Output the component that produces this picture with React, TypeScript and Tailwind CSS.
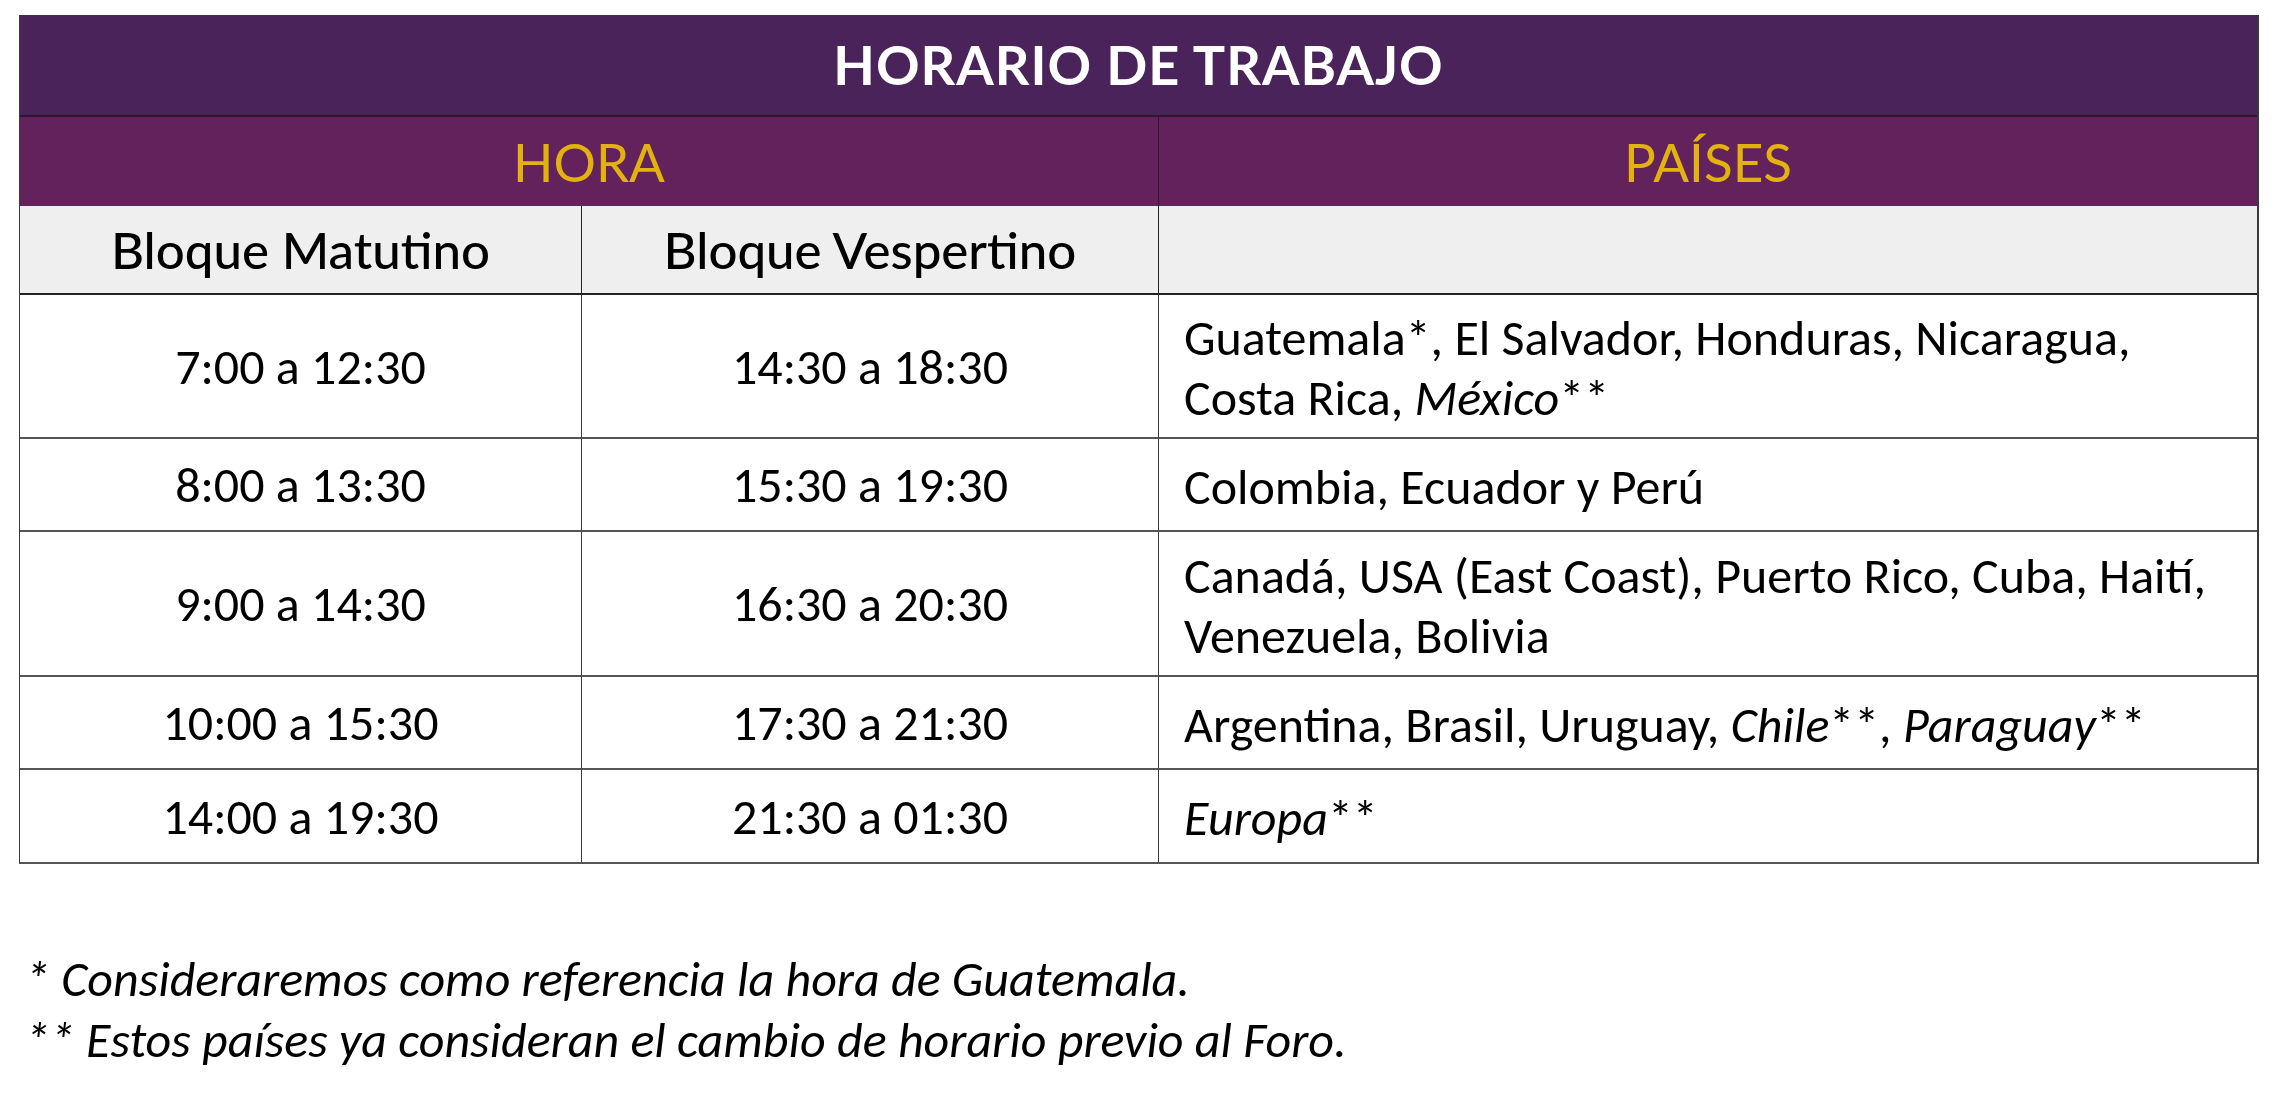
const head = "font-[Futura,'Century_Gothic','URW_Gothic',Lato,sans-serif]"
const body = "font-[Carlito,Calibri,Lato,sans-serif]"

type Row = { h: string; morning: string; evening: string; countries: React.ReactNode }

const rows: Row[] = [
  {
    h: "h-[144px]",
    morning: "7:00 a 12:30",
    evening: "14:30 a 18:30",
    countries: (
      <>
        Guatemala*, El Salvador, Honduras, Nicaragua,
        <br />
        Costa Rica, <span className="italic">México</span>**
      </>
    ),
  },
  { h: "h-[93px]", morning: "8:00 a 13:30", evening: "15:30 a 19:30", countries: "Colombia, Ecuador y Perú" },
  {
    h: "h-[145px]",
    morning: "9:00 a 14:30",
    evening: "16:30 a 20:30",
    countries: (
      <>
        Canadá, USA (East Coast), Puerto Rico, Cuba, Haití,
        <br />
        Venezuela, Bolivia
      </>
    ),
  },
  {
    h: "h-[93px]",
    morning: "10:00 a 15:30",
    evening: "17:30 a 21:30",
    countries: (
      <>
        Argentina, Brasil, Uruguay, <span className="italic">Chile</span>**,{" "}
        <span className="italic">Paraguay</span>**
      </>
    ),
  },
  {
    h: "h-[92px]",
    morning: "14:00 a 19:30",
    evening: "21:30 a 01:30",
    countries: (
      <>
        <span className="italic">Europa</span>**
      </>
    ),
  },
]

export default function App() {
  return (
    <div className="min-h-screen bg-white pt-[15px] pl-[19px] text-black">
      <div className="w-[2240px] border-l border-r-2 border-[#3a3a3a] border-b-2 border-b-[#555]">
        {/* title */}
        <div className="h-[102px] bg-[#4a235b] border-b-2 border-[#2b1730] flex items-center justify-center">
          <h1 className={`${head} text-white font-bold text-[54px] tracking-[1px] leading-none`}>HORARIO DE TRABAJO</h1>
        </div>

        <div className="grid grid-cols-[562px_577px_1fr]">
          {/* group header */}
          <div className="col-span-2 h-[89px] bg-[#63225b] border-r border-[#2b1730] flex items-center justify-center">
            <span className={`${head} text-[#e2b20f] text-[53px] leading-none`}>HORA</span>
          </div>
          <div className="h-[89px] bg-[#63225b] flex items-center justify-center">
            <span className={`${head} text-[#e2b20f] text-[53px] leading-none`}>PAÍSES</span>
          </div>

          {/* sub header */}
          <div className="h-[89px] bg-[#efefef] border-r border-b-2 border-[#222] flex items-center justify-center">
            <span className={`${head} text-[51px] font-medium leading-none`}>Bloque Matutino</span>
          </div>
          <div className="h-[89px] bg-[#efefef] border-r border-b-2 border-[#222] flex items-center justify-center">
            <span className={`${head} text-[51px] font-medium leading-none`}>Bloque Vespertino</span>
          </div>
          <div className="h-[89px] bg-[#efefef] border-b-2 border-[#222]" />

          {rows.map((r, i) => (
            <div key={i} className="contents">
              <div className={`${r.h} border-r border-[#3a3a3a] ${i < rows.length - 1 ? "border-b-2 border-b-[#555]" : ""} flex items-center justify-center`}>
                <span className={`${body} text-[50px]`}>{r.morning}</span>
              </div>
              <div className={`${r.h} border-r border-[#3a3a3a] ${i < rows.length - 1 ? "border-b-2 border-b-[#555]" : ""} flex items-center justify-center`}>
                <span className={`${body} text-[50px]`}>{r.evening}</span>
              </div>
              <div className={`${r.h} ${i < rows.length - 1 ? "border-b-2 border-b-[#555]" : ""} flex items-center pl-[25px] pt-[4px]`}>
                <p className={`${body} text-[50px] leading-[60px] whitespace-nowrap`}>{r.countries}</p>
              </div>
            </div>
          ))}
        </div>
      </div>

      <div className={`${body} italic text-[50px] leading-[61px] mt-[84px] pl-[6px]`}>
        <p>* Consideraremos como referencia la hora de Guatemala.</p>
        <p>** Estos países ya consideran el cambio de horario previo al Foro.</p>
      </div>
    </div>
  )
}
